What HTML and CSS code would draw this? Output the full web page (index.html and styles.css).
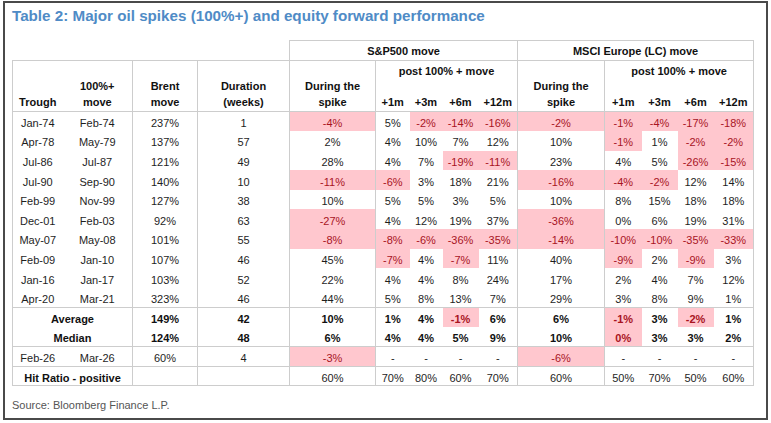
FILE: index.html
```html
<!DOCTYPE html>
<html>
<head>
<meta charset="utf-8">
<link rel="stylesheet" href="styles.css">
</head>
<body>
<div class="frame">
  <div class="title">Table 2: Major oil spikes (100%+) and equity forward performance</div>
  <table class="tbl">
    <colgroup>
      <col class="c1"><col class="c2"><col class="c3"><col class="c4"><col class="c5">
      <col class="c6"><col class="c7"><col class="c8"><col class="c9">
      <col class="c10"><col class="c11"><col class="c12"><col class="c13"><col class="c14">
    </colgroup>
    <tr class="ha">
      <td colspan="4" class="blank"></td>
      <th colspan="5" class="grp">S&amp;P500 move</th>
      <th colspan="5" class="grp">MSCI Europe (LC) move</th>
    </tr>
    <tr class="hb1">
      <th rowspan="2" class="hb">Trough</th>
      <th rowspan="2" class="hb">100%+<br>move</th>
      <th rowspan="2" class="hb">Brent<br>move</th>
      <th rowspan="2" class="hb">Duration<br>(weeks)</th>
      <th rowspan="2" class="hb">During the<br>spike</th>
      <th colspan="4" class="post">post 100% + move</th>
      <th rowspan="2" class="hb">During the<br>spike</th>
      <th colspan="4" class="post">post 100% + move</th>
    </tr>
    <tr class="hb2">
      <th class="hb">+1m</th><th class="hb">+3m</th><th class="hb">+6m</th><th class="hb">+12m</th>
      <th class="hb">+1m</th><th class="hb">+3m</th><th class="hb">+6m</th><th class="hb">+12m</th>
    </tr>
    <tr class="row first">
      <td>Jan-74</td><td>Feb-74</td><td>237%</td><td>1</td>
      <td class="n">-4%</td><td>5%</td><td class="n">-2%</td><td class="n">-14%</td><td class="n">-16%</td>
      <td class="n">-2%</td><td class="n">-1%</td><td class="n">-4%</td><td class="n">-17%</td><td class="n">-18%</td>
    </tr>
    <tr class="row">
      <td>Apr-78</td><td>May-79</td><td>137%</td><td>57</td>
      <td>2%</td><td>4%</td><td>10%</td><td>7%</td><td>12%</td>
      <td>10%</td><td class="n">-1%</td><td>1%</td><td class="n">-2%</td><td class="n">-2%</td>
    </tr>
    <tr class="row">
      <td>Jul-86</td><td>Jul-87</td><td>121%</td><td>49</td>
      <td>28%</td><td>4%</td><td>7%</td><td class="n">-19%</td><td class="n">-11%</td>
      <td>23%</td><td>4%</td><td>5%</td><td class="n">-26%</td><td class="n">-15%</td>
    </tr>
    <tr class="row">
      <td>Jul-90</td><td>Sep-90</td><td>140%</td><td>10</td>
      <td class="n">-11%</td><td class="n">-6%</td><td>3%</td><td>18%</td><td>21%</td>
      <td class="n">-16%</td><td class="n">-4%</td><td class="n">-2%</td><td>12%</td><td>14%</td>
    </tr>
    <tr class="row">
      <td>Feb-99</td><td>Nov-99</td><td>127%</td><td>38</td>
      <td>10%</td><td>5%</td><td>5%</td><td>3%</td><td>5%</td>
      <td>10%</td><td>8%</td><td>15%</td><td>18%</td><td>18%</td>
    </tr>
    <tr class="row">
      <td>Dec-01</td><td>Feb-03</td><td>92%</td><td>63</td>
      <td class="n">-27%</td><td>4%</td><td>12%</td><td>19%</td><td>37%</td>
      <td class="n">-36%</td><td>0%</td><td>6%</td><td>19%</td><td>31%</td>
    </tr>
    <tr class="row">
      <td>May-07</td><td>May-08</td><td>101%</td><td>55</td>
      <td class="n">-8%</td><td class="n">-8%</td><td class="n">-6%</td><td class="n">-36%</td><td class="n">-35%</td>
      <td class="n">-14%</td><td class="n">-10%</td><td class="n">-10%</td><td class="n">-35%</td><td class="n">-33%</td>
    </tr>
    <tr class="row">
      <td>Feb-09</td><td>Jan-10</td><td>107%</td><td>46</td>
      <td>45%</td><td class="n">-7%</td><td>4%</td><td class="n">-7%</td><td>11%</td>
      <td>40%</td><td class="n">-9%</td><td>2%</td><td class="n">-9%</td><td>3%</td>
    </tr>
    <tr class="row">
      <td>Jan-16</td><td>Jan-17</td><td>103%</td><td>52</td>
      <td>22%</td><td>4%</td><td>4%</td><td>8%</td><td>24%</td>
      <td>17%</td><td>2%</td><td>4%</td><td>7%</td><td>12%</td>
    </tr>
    <tr class="row">
      <td>Apr-20</td><td>Mar-21</td><td>323%</td><td>46</td>
      <td>44%</td><td>5%</td><td>8%</td><td>13%</td><td>7%</td>
      <td>29%</td><td>3%</td><td>8%</td><td>9%</td><td>1%</td>
    </tr>
    <tr class="row bold sep">
      <td colspan="2">Average</td><td>149%</td><td>42</td>
      <td>10%</td><td>1%</td><td>4%</td><td class="n">-1%</td><td>6%</td>
      <td>6%</td><td class="n">-1%</td><td>3%</td><td class="n">-2%</td><td>1%</td>
    </tr>
    <tr class="row bold">
      <td colspan="2">Median</td><td>124%</td><td>48</td>
      <td>6%</td><td>4%</td><td>4%</td><td>5%</td><td>9%</td>
      <td>10%</td><td class="n">0%</td><td>3%</td><td>3%</td><td>2%</td>
    </tr>
    <tr class="row sep">
      <td>Feb-26</td><td>Mar-26</td><td>60%</td><td>4</td>
      <td class="n">-3%</td><td>-</td><td>-</td><td>-</td><td>-</td>
      <td class="n">-6%</td><td>-</td><td>-</td><td>-</td><td>-</td>
    </tr>
    <tr class="row sep last">
      <td colspan="2" class="lbl">Hit Ratio - positive</td><td></td><td></td>
      <td>60%</td><td>70%</td><td>80%</td><td>60%</td><td>70%</td>
      <td>60%</td><td>50%</td><td>70%</td><td>50%</td><td>60%</td>
    </tr>
  </table>
  <div class="source">Source: Bloomberg Finance L.P.</div>
</div>
</body>
</html>
```

FILE: styles.css
```css
html, body {
  margin: 0;
  padding: 0;
  background: #ffffff;
}

body {
  font-family: "Liberation Sans", Arial, sans-serif;
  color: #1e1e1e;
}

.frame {
  box-sizing: border-box;
  width: 765px;
  height: 419px;
  margin: 1px 0 0 3px;
  border: 2px solid #4a4a4a;
  padding: 4px 0 0 7px;
  background: #ffffff;
}

.title {
  font-size: 15.2px;
  line-height: 18px;
  font-weight: bold;
  color: #4f8bc6;
  margin-bottom: 15px;
  white-space: nowrap;
}

.tbl {
  border-collapse: collapse;
  table-layout: fixed;
  width: 741px;
  font-size: 11px;
}

.c1 { width: 50px; border-left: 1px solid #cdcdcd; }
.c2 { width: 70px; }
.c3 { width: 65px; border-left: 1px solid #cdcdcd; }
.c4 { width: 92px; border-left: 1px solid #cdcdcd; }
.c5 { width: 86px; border-left: 1px solid #cdcdcd; }
.c6 { width: 34px; border-left: 1px solid #cdcdcd; }
.c7 { width: 33px; }
.c8 { width: 36px; }
.c9 { width: 39px; }
.c10 { width: 87px; border-left: 1px solid #cdcdcd; }
.c11 { width: 37px; border-left: 1px solid #cdcdcd; }
.c12 { width: 36px; }
.c13 { width: 36px; }
.c14 { width: 40px; border-right: 1px solid #cdcdcd; }

th, td {
  padding: 0;
  text-align: center;
  white-space: nowrap;
  overflow: hidden;
}

th {
  font-weight: bold;
  color: #111;
}

.blank {
  border-left: hidden;
  border-top: hidden;
}

.ha { height: 20px; }
.grp {
  border-top: 1px solid #cdcdcd;
  vertical-align: middle;
}

.hb1 {
  height: 22px;
  border-top: 1px solid #cdcdcd;
}
.hb2 { height: 29px; }

.hb {
  vertical-align: bottom;
  line-height: 16px;
  padding-bottom: 1px;
}

.post {
  vertical-align: middle;
  padding-bottom: 1px;
}

.row {
  height: 19.6px;
}
.row td {
  vertical-align: middle;
  line-height: 13px;
  padding-top: 4px;
}

.first { border-top: 1px solid #cdcdcd; }
.sep { border-top: 1px solid #cdcdcd; }
.last { border-bottom: 1px solid #cdcdcd; }

.bold td { font-weight: bold; color: #111; }
.lbl { font-weight: bold; color: #111; }

td.n {
  background: #ffc7ce;
  color: #a8141f;
}

.source {
  margin-top: 12px;
  font-size: 11px;
  line-height: 14px;
  color: #555555;
}
```
